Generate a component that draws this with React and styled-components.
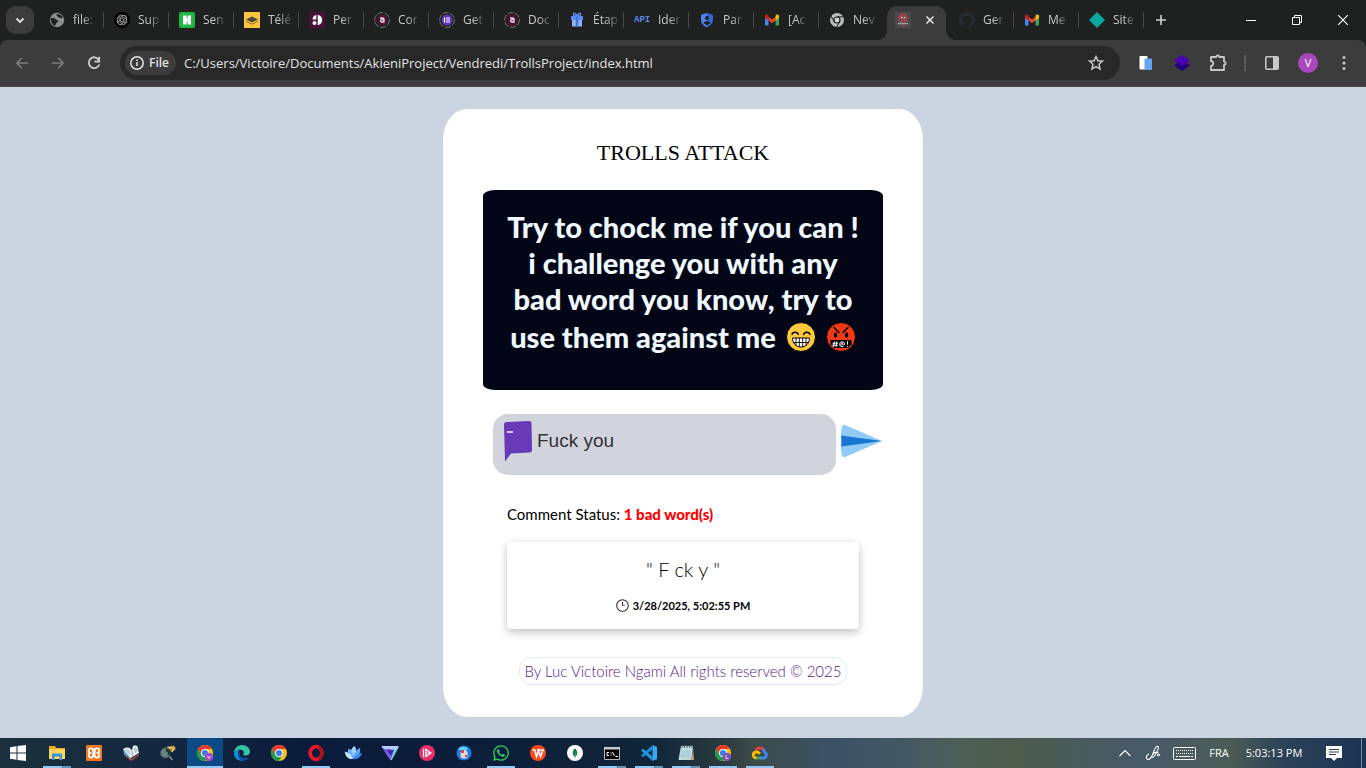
import React from 'react';
import styled, { createGlobalStyle, css } from 'styled-components';
import { FaGithub, FaWhatsapp } from 'react-icons/fa';
import { SiMongodb, SiOpenai } from 'react-icons/si';

const UI = '"Open Sans", "Noto Sans", sans-serif';
const BODY = 'Lato, "Open Sans", sans-serif';

const GlobalStyle = createGlobalStyle`
  *, *::before, *::after { box-sizing: border-box; }
  body { margin: 0; background: #cbd5e1; font-family: ${BODY}; color: #000; }
  button { border: 0; padding: 0; margin: 0; background: none; color: inherit; font: inherit; cursor: pointer; }
  svg { display: block; flex: none; }
  h1, h2, p { margin: 0; font-weight: inherit; }
`;

const Desktop = styled.div`
  min-height: 100vh;
  display: flex;
  flex-direction: column;
`;

/* ---------- browser window ---------- */

const Browser = styled.header`
  background: #1f2120;
`;

const TabStrip = styled.div`
  display: flex;
  align-items: center;
  height: 40px;
  color: #c7c7c7;
  font: 12px/16px ${UI};
`;

const TabSearch = styled.button`
  display: grid;
  place-items: center;
  width: 28px;
  height: 28px;
  margin: 0 5px 0 6px;
  border-radius: 10px;
  background: #3c3c3c;
`;

const Tab = styled.button`
  display: flex;
  align-items: center;
  gap: 8px;
  width: 65px;
  height: 16px;
  padding-left: 10px;
  border-right: 1px solid ${(p) => (p.$plain ? 'transparent' : '#474747')};
`;

const TabTitle = styled.span`
  white-space: nowrap;
  mask-image: linear-gradient(90deg, #000 50%, rgba(0, 0, 0, 0.2));
`;

const ActiveTab = styled.div`
  position: relative;
  align-self: flex-end;
  display: flex;
  align-items: center;
  justify-content: space-between;
  width: 59px;
  height: 34px;
  margin: 0 3px;
  padding: 0 10px 6px 8px;
  border-radius: 10px 10px 0 0;
  background: #3c3c3c;
  color: #e8e8e8;
  &::before, &::after {
    content: '';
    position: absolute;
    bottom: 0;
    width: 10px;
    height: 10px;
  }
  &::before { right: 100%; background: radial-gradient(circle at 0 0, transparent 10px, #3c3c3c 10px); }
  &::after { left: 100%; background: radial-gradient(circle at 100% 0, transparent 10px, #3c3c3c 10px); }
`;

const NewTab = styled.button`
  display: grid;
  place-items: center;
  width: 34px;
  height: 28px;
`;

const WindowControls = styled.div`
  display: flex;
  margin-left: auto;
  color: #fff;
`;

const WindowButton = styled.button`
  display: grid;
  place-items: center;
  width: 46px;
  height: 40px;
`;

const Toolbar = styled.nav`
  display: flex;
  align-items: center;
  height: 47px;
  padding: 0 4px 1px;
  border-radius: 8px 8px 0 0;
  background: #3c3c3c;
  box-shadow: inset 0 -1px #4a4a4a;
  color: #c7c7c7;
`;

const ToolButton = styled.button`
  display: grid;
  place-items: center;
  width: 36px;
  height: 36px;
  color: ${(p) => (p.disabled ? '#7d7d7d' : '#c7c7c7')};
`;

const Omnibox = styled.div`
  flex: 1;
  display: flex;
  align-items: center;
  gap: 8px;
  height: 34px;
  margin: 0 8px;
  padding: 0 6px 0 5px;
  border-radius: 17px;
  background: #282828;
`;

const SchemeChip = styled.button`
  display: flex;
  align-items: center;
  gap: 4px;
  height: 24px;
  padding: 0 7px 0 4px;
  border-radius: 12px;
  background: #3c3c3c;
  color: #e3e3e3;
  font: 600 12px/16px ${UI};
`;

const Address = styled.input`
  flex: 1;
  min-width: 0;
  padding: 0;
  border: 0;
  outline: 0;
  background: none;
  color: #e3e3e3;
  font: 13px/20px ${UI};
`;

const Divider = styled.span`
  width: 2px;
  height: 16px;
  margin: 0 8px;
  background: #5a5a5a;
`;

const Avatar = styled.span`
  width: 20px;
  height: 20px;
  border-radius: 50%;
  background: #ab47bc;
  color: #fff;
  font: 11px/20px ${UI};
  text-align: center;
`;

/* ---------- page ---------- */

const Page = styled.main`
  flex: 1;
  display: flex;
  justify-content: center;
  align-items: flex-start;
  padding: 22px 16px 21px;
  background: #cbd5e1;
`;

const Card = styled.section`
  display: flex;
  flex-direction: column;
  width: 100%;
  max-width: 480px;
  padding: 28px 40px 32px;
  border-radius: 5%;
  background: #fff;
`;

const Title = styled.h1`
  font: 22px/32px "Liberation Serif", "Times New Roman", serif;
  text-align: center;
`;

const Banner = styled.h2`
  min-height: 200px;
  margin-top: 21px;
  padding: 19px 16px;
  border-radius: 3%;
  background: #020617;
  color: #f0f8ff;
  font: 900 29px/36px ${BODY};
  text-align: center;
`;

const BannerLine = styled.span`
  display: block;
  white-space: nowrap;
`;

const EmojiLine = styled(BannerLine)`
  display: flex;
  align-items: center;
  justify-content: center;
  gap: 10px;
  height: 40px;
`;

const CommentForm = styled.form`
  display: flex;
  align-items: center;
  gap: 4px;
  margin: 24px 0 0 10px;
`;

const CommentField = styled.label`
  flex: 1;
  display: flex;
  align-items: center;
  gap: 4px;
  height: 61px;
  padding: 0 12px 7px 10px;
  border-radius: 15px;
  background: #d1d4dc;
`;

const CommentInput = styled.input`
  flex: 1;
  min-width: 0;
  padding: 0;
  border: 0;
  outline: 0;
  background: none;
  color: #333;
  font: 19px/24px "Liberation Sans", Arial, sans-serif;
`;

const SendButton = styled.button`
  padding: 0 1px 8px 0;
`;

const Status = styled.p`
  margin: 27px 24px 0;
  font-size: 15px;
  line-height: 24px;
`;

const BadCount = styled.strong`
  color: #f00;
  font-weight: 900;
`;

const Comment = styled.article`
  margin: 16px 24px 0;
  padding: 15px 16px;
  border-radius: 4px;
  background: #fff;
  box-shadow: 0 4px 8px rgba(0, 0, 0, 0.2), 0 0 8px rgba(0, 0, 0, 0.06);
  text-align: center;
`;

const CommentText = styled.p`
  font-size: 20px;
  font-weight: 300;
  line-height: 24px;
`;

const CommentDate = styled.p`
  display: flex;
  align-items: center;
  justify-content: center;
  gap: 4px;
  margin-top: 16px;
  font-size: 11px;
  font-weight: 700;
  line-height: 17px;
`;

const Credit = styled.a`
  align-self: center;
  margin-top: 28px;
  padding: 0 5px;
  border: 1px solid #dbeafe;
  border-radius: 12px;
  color: #551a8b;
  font-size: 15px;
  font-weight: 300;
  line-height: 26px;
  text-decoration: none;
`;

/* ---------- taskbar ---------- */

const Taskbar = styled.footer`
  display: flex;
  gap: 1px;
  height: 30px;
  background: linear-gradient(90deg, #1b313d 0%, #132740 12%, #0a1c3b 22%, #0b1d3a 34%, #10263a 48%, #2b3b3e 53%, #3b4b49 55%, #3c5265 61%, #455961 67%, #4d5f58 70%, #4c5b4b 74%, #475a5e 80%, #475a68 84%, #4b5c55 90%, #2b4258 94%, #1d3353 100%);
  color: #fff;
  font: 11px/16px ${UI};
`;

const Start = styled.button`
  display: flex;
  align-items: center;
  width: 38px;
  padding-left: 10px;
`;

const TaskButton = styled.button`
  display: flex;
  flex-direction: column;
  align-items: center;
  width: 36px;
  padding-top: 6px;
  background: ${(p) => (p.$active ? '#0b4a85' : 'none')};
  &::after {
    content: '';
    width: ${(p) => (p.$active ? '36px' : '28px')};
    height: 2px;
    margin-top: auto;
    ${(p) => p.$open && css`background: #90c8f6;`}
    ${(p) => p.$stacked && css`background: linear-gradient(90deg, #90c8f6 19px, #40607c 19px, #6b93b4 20px);`}
  }
`;

const Tray = styled.div`
  display: flex;
  align-items: center;
  margin-left: auto;
`;

const TrayButton = styled.button`
  display: grid;
  place-items: center;
  width: ${(p) => p.$w}px;
  height: 30px;
`;

const ShowDesktop = styled.button`
  width: 5px;
  height: 30px;
  border-left: 1px solid #7b8a9c;
`;

/* ---------- drawings ---------- */

const Svg = ({ s = 16, h, v = '0 0 16 16', children, ...rest }) => (
  <svg width={s} height={h || s} viewBox={v} fill="none" aria-hidden="true" {...rest}>{children}</svg>
);

const Globe = () => (
  <Svg>
    <circle cx="8" cy="8" r="7.2" fill="#8b8e8d" />
    <path d="M1.800 6c2 .2 4.400-.2 5 1.200.6 1.500 2.400.6 2.500 2 .1 1.500-2.300 1-2.500 2.500-.1 1-.3 1.700-1 2C3 12.500 1.500 9.500 1.800 6zM7.500 2.200c-.6 1.200.7 1.500 1.300 2.300.7 1 1.700 1.800 2.700 1.300.9-.4 1.800.4 2.600.2C13.400 4 11.500 2 9 1.900z" fill="#1f2120" />
  </Svg>
);
const OpenAi = () => (
  <Svg><circle cx="8" cy="8" r="8" fill="#000" /><SiOpenai x="2.5" y="2.5" size={11} color="#d8d8d8" /></Svg>
);
const GreenK = () => (
  <Svg><rect width="16" height="16" rx="2" fill="#1db544" /><path d="M4 3.500h3.600v2.800h1V3.500H12v3.700L11.200 8l.8.800v3.700H8.600V9.700h-1v2.800H4z" fill="#fff" /></Svg>
);
const Yellow = () => (
  <Svg><rect width="16" height="16" fill="#fec53d" /><path d="m2 7.500 6-3 6 3-6 3z" fill="#4e4a42" /><path d="m2 8.800 6 3 6-3v.9l-6 3-6-3z" fill="#8b6d35" /></Svg>
);
const Akieni = () => (
  <Svg><rect width="16" height="16" fill="#4b1237" /><path d="M7.300 3C4.900 3.500 3.500 5.300 3.500 7.600h3.800zM8.700 2.800c2.700.5 4.500 2.600 4.500 5.200s-1.800 4.700-4.500 5.200z" fill="#fff" /><circle cx="5.500" cy="11" r="2" fill="#fff" /></Svg>
);
const Ring = ({ fill, children }) => (
  <Svg><circle cx="8" cy="8" r="7.400" stroke="#77757a" strokeWidth="1" strokeDasharray="6 1.500" /><circle cx="8" cy="8" r="5.500" fill={fill} />{children}</Svg>
);
const RingA = () => (
  <Ring fill="#4b1237"><path d="M6 6h2.500A1.500 1.500 0 0 1 10 7.500V10H7.500a1.200 1.200 0 0 1 0-2.300H10" stroke="#e9dfe6" strokeWidth="1.300" /></Ring>
);
const RingList = () => (
  <Ring fill="#6034b8"><path d="M5.500 5.500v5M7 6h4M7 8h4M7 10h4" stroke="#fff" strokeWidth="1.200" /></Ring>
);
const Gift = () => (
  <Svg>
    <path d="M2 4h12v4H2z" fill="#5b8af0" /><path d="M3 8h10v6.500H3z" fill="#8fb2f5" /><path d="M6.800 4h2.400v10.500H6.800z" fill="#3f73dd" />
    <path d="M8 4C5 4 4 3 4.500 1.800S7.500 1.500 8 4c.5-2.500 3-3.400 3.500-2.200S11 4 8 4z" stroke="#5b8af0" strokeWidth="1.400" />
  </Svg>
);
const ApiMark = styled.span`
  width: 16px;
  color: #5c86e8;
  font: 700 9px/16px "Liberation Mono", monospace;
`;
const Shield = () => (
  <Svg><path d="M8 1 14 3v4.500c0 3.800-2.600 6.500-6 7.800-3.400-1.300-6-4-6-7.800V3z" fill="#3367d6" /><path d="M8 1v14.300c-3.400-1.300-6-4-6-7.800V3z" fill="#4f82ec" /><circle cx="8" cy="6" r="2" fill="#1f2120" /><path d="M4.500 11c1-2.200 6-2.200 7 0L8 13.500z" fill="#1f2120" /></Svg>
);
const Gmail = () => (
  <Svg>
    <path d="M1 4v8.500c0 .6.400 1 1 1h2.500V7z" fill="#4285f4" /><path d="M15 4v8.500c0 .6-.4 1-1 1h-2.500V7z" fill="#34a853" />
    <path d="M4.500 4.800 8 7.500l3.500-2.700V8.500L8 11.200 4.500 8.500z" fill="#ea4335" /><path d="M1 4.200C1 2.700 2.700 2 3.800 2.900l.7.500v5.100L1 6z" fill="#c5221f" /><path d="M15 4.200c0-1.500-1.700-2.200-2.800-1.300l-.7.500v5.100L15 6z" fill="#fbbc04" />
  </Svg>
);
const ChromeGrey = () => (
  <Svg>
    <circle cx="8" cy="8" r="7" fill="#b9bbba" /><circle cx="8" cy="8" r="3.600" fill="#1f2120" /><circle cx="8" cy="8" r="2.400" fill="#d3d4d3" />
    <path d="M8 4.800h6.500M5.200 9.600 2 4.100M10.800 9.600 7.600 15" stroke="#1f2120" strokeWidth="1" />
  </Svg>
);
const Troll = () => (
  <Svg><rect width="16" height="16" fill="#4b4b4d" /><circle cx="8" cy="6" r="4" stroke="#b8373d" strokeWidth="1.500" fill="#6f5255" /><path d="m5.500 3.500 5 5" stroke="#e05055" /><path d="M6 5.500h1.500M9 5.500h1.500" stroke="#ddd" /><path d="M3 11.500h10" stroke="#bdbdbd" strokeWidth="1.500" strokeDasharray="1.500 .6" /><circle cx="8" cy="14" r=".8" fill="#c44" /></Svg>
);
const Diamond = () => <Svg><path d="m8 0 8 8-8 8-8-8z" fill="#0aa6a0" /></Svg>;
const GitHub = () => <FaGithub size={16} color="#262c36" />;

const Chrome = ({ badge, letter }) => (
  <Svg s={18} v="0 0 18 18">
    <circle cx="9" cy="9" r="8" fill="#fbc116" />
    <path d="M2.070 5A8 8 0 0 1 15.930 5H9L5.540 11z" fill="#e33b2e" />
    <path d="M2.070 5A8 8 0 0 0 9 17l3.460-6H5.540z" fill="#229a4b" />
    <circle cx="9" cy="9" r="4" fill="#fff" /><circle cx="9" cy="9" r="3.100" fill="#3b7de8" />
    {badge && <circle cx="13" cy="13" r="4.200" fill={badge} />}
    {letter && <path d={letter} stroke="#e8d9f2" strokeWidth=".9" />}
  </Svg>
);

const Explorer = () => (
  <Svg s={18} v="0 0 18 18"><path d="M1 2h6l1.500 2H17v3H1z" fill="#e9a820" /><path d="M1 5h16v10H1z" fill="#fcd462" /><path d="M4 16V9.500h10V16h-2.500v-3.500h-5V16z" fill="#3a95dc" /></Svg>
);
const Xampp = () => (
  <Svg s={18} v="0 0 18 18">
    <rect x="1" y="1" width="16" height="16" rx="1" fill="#f37623" />
    <path d="M6.500 9H6a2.300 2.300 0 1 1 2.300-2.300V9h1.400V6.700A2.300 2.300 0 1 1 12 9h-.5M6.500 9H6a2.300 2.300 0 1 0 2.300 2.300V9M9.700 9v2.300A2.300 2.300 0 1 0 12 9" stroke="#fff" strokeWidth="1.700" />
  </Svg>
);
const Book = () => (
  <Svg s={18} v="0 0 18 18">
    <path d="m2 9 7 6 8-5v1.500L9 17l-7-6z" fill="#b64a3a" />
    <path d="m1 5 1 5 7 5.500-.5-3z" fill="#4fa9c4" />
    <path d="M1 5c2-1.600 4-2 6-1.200L10 6l1-4c2-.8 3.500-.5 4.500.5L17 9l-8.500 5z" fill="#e9f1f4" />
    <path d="m3 5.500 5 5M5 4.800l4 4M12 4l2 5M13.500 3.500l1.800 4.500M10 6l.5 6" stroke="#7d9fb0" strokeWidth=".8" />
  </Svg>
);
const Magnifier = () => (
  <Svg s={18} v="0 0 18 18"><path d="m7 3 8-1.500L17 5l-4 3z" fill="#b98b3c" /><path d="m9 3.500 6 .5-2 4" stroke="#ecc66a" strokeWidth="1.400" /><circle cx="6.500" cy="9" r="5" fill="#6b7f86" stroke="#4b565a" /><path d="M7 6c3 0 4 2 3 5" stroke="#123d20" strokeWidth="3" /><path d="m10.500 12.500 3 3.500" stroke="#8b9498" strokeWidth="1.500" /></Svg>
);
const Edge = () => (
  <Svg s={18} v="0 0 18 18">
    <path d="M1 9.500C1 4.500 4.500 1 9.200 1 13.500 1 17 4 17 7.600c0 2.400-1.700 4-4.200 4-1.600 0-2.600-.5-2.600-1.200 0-.5.700-.8.700-1.900C10.900 7 9.500 5.800 7.300 5.800 4 5.800 1.500 7.600 1 9.500z" fill="#31c4a5" />
    <path d="M1 9.500c.4-2.500 2.800-4.200 5.600-4.200-1 1.400-1.500 2.800-1.500 4.300 0 3.600 2.500 6.200 6.500 6.200C7 18.500 1 15 1 9.500z" fill="#178ed8" />
    <path d="M7.200 8C5.500 12 9 15.500 15.700 13.500 13 18 6 18 5.200 12c-.2-1.600.6-3.300 2-4z" fill="#0b52a5" />
  </Svg>
);
const Opera = () => (
  <Svg s={18} v="0 0 18 18"><ellipse cx="9" cy="9" rx="5.900" ry="6.300" stroke="#e5172c" strokeWidth="3.800" /><path d="M11.500 2.800c4.500 2 4.500 10.400 0 12.400" stroke="#a9121f" strokeWidth="3" /></Svg>
);
const Lotus = () => (
  <Svg s={18} v="0 0 18 18">
    <path d="M8.500 15C5 11 6 5 10.500 2c3 4 2 9-2 13z" fill="#9fd6ff" /><path d="M8.500 15C10 9 13 5 16 4c1 5-2 10-7.500 11z" fill="#5ea9f7" />
    <path d="M8.500 15C4 13 3 8 4.500 4.500c4 2 5.500 6 4 10.500z" fill="#64b1fb" /><path d="M8.500 15c3-4 6-6 9.500-6-1 4-5 7-9.500 6z" fill="#3f86ea" />
    <path d="M8.500 15C4 15.500 1 12 .8 7.500c4 .8 7 3.500 7.700 7.500z" fill="#c4e6ff" />
  </Svg>
);
const Vpn = () => (
  <Svg s={18} v="0 0 18 18"><path d="M2 2h14.500c1 0 1.300.8.900 1.600L11 15.500c-.6 1-1.700 1-2.200 0L1 3.500C.6 2.700 1 2 2 2z" fill="#7a5cf0" /><path d="M2 2h14.500c1 0 1.300.8.900 1.600L15.500 7 4 5 1 3.500C.6 2.700 1 2 2 2z" fill="#b9c9fb" /><path d="M17.400 3.600 11 15.500c-.4.700-1 .9-1.500.7L13 6z" fill="#6fd6cf" /><path d="m5.500 5.500 4.300 6.500L13 5.800z" fill="#3f2aa8" /></Svg>
);
const Play = () => (
  <Svg s={18} v="0 0 18 18"><circle cx="9" cy="9" r="8" fill="#ec2f6b" /><path d="M5.500 5v8M7.800 5.500v7L13 9zM7.800 9H13" stroke="#fff" strokeWidth="1.200" /></Svg>
);
const Blob = () => (
  <Svg s={18} v="0 0 18 18"><circle cx="9" cy="9" r="7.500" fill="#1c7de0" /><path d="M3 5c3-3 8-3 10 0L9 8z" fill="#65d5ff" /><path d="M5.500 8c2-2 6-2 7 0v5c-2 2-5 2-7 0z" fill="#e9d5d8" /><path d="M6 6h3v3H6zM10 11h2v2h-2z" fill="#d44355" /></Svg>
);
const WhatsApp = () => <FaWhatsapp size={18} color="#27d366" />;
const Wps = () => (
  <Svg s={18} v="0 0 18 18"><circle cx="9" cy="9" r="8" fill="#ff4b1f" /><path d="M3.500 6h2.200L7.500 12.500 9.500 6.500l2 6L14 6H8" stroke="#fff" strokeWidth="1.600" /></Svg>
);
const Mongo = () => <Svg s={18} v="0 0 18 18"><circle cx="9" cy="9" r="8" fill="#fff" /><SiMongodb x="4" y="4" size={10} color="#13794b" /></Svg>;
const Cmd = () => (
  <Svg s={18} v="0 0 18 18"><path d="M1.500 3.500h15v12h-15z" fill="#000" stroke="#b5b5b5" /><path d="M1 3h16v2.500H1z" fill="#c9c9c9" /><path d="M6 8.500H4v3h2M8 8.500v1M8 10.500v1M9.500 8l2 4M12.500 12.500H15" stroke="#fff" strokeWidth="1" /></Svg>
);
const Code = () => (
  <Svg s={18} v="0 0 18 18"><path d="m12.500 1 4.500 2v12l-4.500 2z" fill="#3ba9ee" /><path d="M12.500 1v4.500L3 13.200 1 11.600z" fill="#1b87cf" /><path d="M12.500 17v-4.500L3 4.800 1 6.400z" fill="#2497df" /></Svg>
);
const Notepad = () => (
  <Svg s={18} v="0 0 18 18"><path d="M4 2h12l-1.500 14H1.500z" fill="#c3dde6" /><path d="M16 3.500 17 16H3l12-.5z" fill="#c8b070" /><path d="M5 1v3M7.500 1v3M10 1v3M12.500 1v3M15 1v3" stroke="#4b5b60" strokeWidth="1" /><path d="M4 7h10M4 9h10M3.500 11h10M3 13h10" stroke="#8db4c3" strokeWidth=".7" /></Svg>
);
const Cloud = () => (
  <Svg s={18} v="0 0 18 18" strokeWidth="2.800"><path d="M5 6.500C6.500 3 11 3 12.500 6" stroke="#ea4335" /><path d="M11.800 5c1.500 1 1.700 2 2 3.500 2.800 1.500 1.700 5.500-1 5.500H9" stroke="#4285f4" /><path d="M9.500 14H5" stroke="#34a853" /><path d="M5.500 14c-4 0-4.300-5.500-.5-6 2-.2 3 .8 4 1.800" stroke="#fbbc04" /></Svg>
);

const Grin = () => (
  <Svg s={30} v="0 0 30 30">
    <circle cx="15" cy="15" r="14.500" fill="#ffc83d" stroke="#000" />
    <path d="M6 12.500c.6-3 5.500-3 6.300 0M17.700 12.500c.6-3 5.500-3 6.300 0" stroke="#000" strokeWidth="1.300" strokeLinecap="round" />
    <path d="M6.500 16h17c0 5-3.500 9-8.500 9s-8.500-4-8.500-9z" fill="#fff" stroke="#000" />
    <path d="M7 20.500h16M10 16v7.500M13.300 16v9M16.700 16v9M20 16v7.500" stroke="#000" strokeWidth=".9" />
  </Svg>
);
const Cursing = () => (
  <Svg s={30} v="0 0 30 30">
    <circle cx="15" cy="15" r="14.500" fill="#f03a17" stroke="#000" />
    <path d="m8 5.500 5 5M22 5.500l-5 5" stroke="#000" strokeWidth="1.500" strokeLinecap="round" />
    <ellipse cx="9.500" cy="13" rx="1.700" ry="2.700" fill="#000" /><ellipse cx="20.500" cy="13" rx="1.700" ry="2.700" fill="#000" />
    <path d="M4.500 18h21v4.500L22 26H8l-3.500-3.500z" fill="#000" />
    <path d="M8.500 19.500 7.500 25M11 19.500 10 25M6.500 21.200H12M6.200 23.200h5.500M17 24.500c-4 1-4.500-4.500-1-4.700 3-.2 3.200 3.700 1.300 3.500-1-.1-.8-2.300-.8-2.300-1.500-.5-2.500 2.200-.8 2.200M21.500 19.200v3.500M21.500 24v1.200" stroke="#fff" strokeWidth="1" />
  </Svg>
);
const CommentIcon = () => (
  <Svg s={30} h={42} v="0 0 30 42"><path d="M1 5C1 3.300 2 2.200 3.800 2.100L26 1c1.700 0 2.500 1 2.500 2.700L29 30c0 1.800-.9 2.500-2.600 2.500L8 33.500 2 41.500z" fill="#673ab7" /><path d="M4 11h6v2H4z" fill="#d8c9ee" /></Svg>
);
const Plane = () => (
  <Svg s={42} h={34} v="0 0 42 34"><path d="M1 12C1 4 2 0 5 1l37 16L5 33c-3 1-4-3-4-11z" fill="#90caf9" /><path d="m1 11.500 41 5.500L1 22.500c.7-3.500.7-7.500 0-11z" fill="#1976d2" /></Svg>
);

const tabs = [
  ['file:', Globe], ['Sup', OpenAi], ['Sen', GreenK], ['Télé', Yellow], ['Per', Akieni],
  ['Cor', RingA], ['Get', RingList], ['Doc', RingA], ['Étap', Gift],
  ['Ider', () => <ApiMark>API</ApiMark>], ['Par', Shield], ['[Ac', Gmail], ['Nev', ChromeGrey],
];
const tabsAfter = [['Ger', GitHub], ['Me', Gmail], ['Site', Diamond]];

const apps = [
  ['File Explorer', Explorer, 'stacked'], ['XAMPP', Xampp], ['Dictionary', Book], ['Search tool', Magnifier],
  ['Chrome, Victoire', () => <Chrome badge="#a64cc0" letter="M11.500 12 13 14.500 14.500 12" />, 'active'],
  ['Edge', Edge], ['Chrome', Chrome], ['Opera', Opera, 'open'], ['Lotus', Lotus], ['VPN', Vpn], ['Player', Play],
  ['Game', Blob], ['WhatsApp', WhatsApp, 'open'], ['WPS Office', Wps], ['MongoDB', Mongo],
  ['Command Prompt', Cmd, 'stacked'], ['VS Code', Code, 'stacked'], ['Notepad', Notepad, 'stacked'],
  ['Chrome, Luc', () => <Chrome badge="#7b4fb5" letter="M12 11v3.500h2.300" />, 'open'], ['Google Cloud', Cloud, 'open'],
];

const renderTab = ([title, Icon], i, list) => (
  <Tab key={i} $plain={list === tabs && i === tabs.length - 1}>
    <Icon />
    <TabTitle>{title}</TabTitle>
  </Tab>
);

export default function App() {
  return (
    <Desktop>
      <GlobalStyle />
      <Browser>
        <TabStrip>
          <TabSearch aria-label="Search tabs">
            <Svg s={10} v="0 0 10 10"><path d="m1.500 3.500 3.500 3.500 3.500-3.500" stroke="#e3e3e3" strokeWidth="1.800" /></Svg>
          </TabSearch>
          {tabs.map(renderTab)}
          <ActiveTab>
            <Troll />
            <button aria-label="Close tab">
              <Svg s={12} v="0 0 12 12"><path d="m2.500 2.500 7 7m0-7-7 7" stroke="currentColor" strokeWidth="1.500" /></Svg>
            </button>
          </ActiveTab>
          {tabsAfter.map(renderTab)}
          <NewTab aria-label="New tab">
            <Svg s={12} v="0 0 12 12"><path d="M6 1v10M1 6h10" stroke="#d0d0d0" strokeWidth="1.600" /></Svg>
          </NewTab>
          <WindowControls>
            <WindowButton aria-label="Minimize"><Svg s={10} v="0 0 10 10"><path d="M0 5.500h10" stroke="#fff" /></Svg></WindowButton>
            <WindowButton aria-label="Restore"><Svg s={10} v="0 0 10 10"><path d="M.5 2.500h7v7h-7zM2.500 2.500v-2h7v7h-2" stroke="#fff" /></Svg></WindowButton>
            <WindowButton aria-label="Close"><Svg s={10} v="0 0 10 10"><path d="m0 0 10 10m0-10L0 10" stroke="#fff" strokeWidth="1.100" /></Svg></WindowButton>
          </WindowControls>
        </TabStrip>

        <Toolbar aria-label="Browser toolbar">
          <ToolButton aria-label="Back" disabled><Svg><path d="M14 8H3M8 2.800 2.800 8 8 13.200" stroke="currentColor" strokeWidth="1.600" /></Svg></ToolButton>
          <ToolButton aria-label="Forward" disabled><Svg><path d="M2 8h11M8 2.800 13.200 8 8 13.200" stroke="currentColor" strokeWidth="1.600" /></Svg></ToolButton>
          <ToolButton aria-label="Reload"><Svg><path d="M12.900 5A5.400 5.400 0 1 0 13.300 9.500" stroke="#cfcfcf" strokeWidth="1.800" /><path d="M13.200 1.800v4.700H8.500" stroke="#cfcfcf" strokeWidth="1.800" /></Svg></ToolButton>
          <Omnibox>
            <SchemeChip>
              <Svg><circle cx="8" cy="8" r="6.200" stroke="currentColor" strokeWidth="1.500" /><path d="M8 7v4M8 4.500V6" stroke="currentColor" strokeWidth="1.500" /></Svg>
              File
            </SchemeChip>
            <Address aria-label="Address" defaultValue="C:/Users/Victoire/Documents/AkieniProject/Vendredi/TrollsProject/index.html" />
            <ToolButton aria-label="Bookmark this page"><Svg><path d="m8 1.500 1.900 4.300 4.600.4-3.500 3.100 1.100 4.600L8 11.500l-4.100 2.400L5 9.300 1.500 6.200l4.600-.4z" stroke="currentColor" strokeWidth="1.500" /></Svg></ToolButton>
          </Omnibox>
          <ToolButton aria-label="Copy extension"><Svg><rect x="1.500" y="1" width="8" height="13.500" rx="1" fill="#fff" /><rect x="6.500" y="3.500" width="7.500" height="11.500" rx="1" fill="#64a5f7" /></Svg></ToolButton>
          <ToolButton aria-label="Layers extension"><Svg><path d="m8 5 8 5.500L8 16l-8-5.500z" fill="#21007b" /><path d="m8 0 8 5.500L8 11 0 5.500z" fill="#4a00b4" /></Svg></ToolButton>
          <ToolButton aria-label="Extensions"><Svg s={18} v="0 0 18 18"><path d="M2 3h5.300a1.500 1.500 0 0 1 3 0H15v4.600a1.600 1.600 0 0 1 0 3.200V16H2v-4.200c3-.3 3-4.300 0-4.600z" stroke="currentColor" strokeWidth="1.800" strokeLinejoin="round" /></Svg></ToolButton>
          <Divider />
          <ToolButton aria-label="Side panel"><Svg><rect x="1.800" y="1.800" width="12.400" height="12.400" rx="1" stroke="currentColor" strokeWidth="1.600" /><path d="M9 2h5v12H9z" fill="currentColor" /></Svg></ToolButton>
          <ToolButton aria-label="Profile"><Avatar>V</Avatar></ToolButton>
          <ToolButton aria-label="Menu"><Svg><circle cx="8" cy="2.500" r="1.500" fill="currentColor" /><circle cx="8" cy="8" r="1.500" fill="currentColor" /><circle cx="8" cy="13.500" r="1.500" fill="currentColor" /></Svg></ToolButton>
        </Toolbar>
      </Browser>

      <Page>
        <Card>
          <Title>TROLLS ATTACK</Title>
          <Banner>
            <BannerLine>Try to chock me if you can !</BannerLine>
            <BannerLine>i challenge you with any</BannerLine>
            <BannerLine>bad word you know, try to</BannerLine>
            <EmojiLine>use them against me <Grin /> <Cursing /></EmojiLine>
          </Banner>
          <CommentForm onSubmit={(e) => e.preventDefault()}>
            <CommentField>
              <CommentIcon />
              <CommentInput aria-label="Comment" defaultValue="Fuck you" />
            </CommentField>
            <SendButton aria-label="Send"><Plane /></SendButton>
          </CommentForm>
          <Status>Comment Status: <BadCount>1 bad word(s)</BadCount></Status>
          <Comment>
            <CommentText>" F ck y "</CommentText>
            <CommentDate>
              <Svg s={13} v="0 0 13 13"><circle cx="6.500" cy="6.500" r="5.800" stroke="#333" strokeWidth="1.100" /><path d="M6.500 3v4" stroke="#333" /><path d="M6.500 6.500H9" stroke="#d33" strokeWidth=".8" /></Svg>
              3/28/2025, 5:02:55 PM
            </CommentDate>
          </Comment>
          <Credit href="#">By Luc Victoire Ngami All rights reserved © 2025</Credit>
        </Card>
      </Page>

      <Taskbar>
        <Start aria-label="Start"><Svg><path d="M0 2.200 6.500 1.300v6.200H0zM7.500 1.100 16 0v7.500H7.500zM0 8.500h6.500v6.200L0 13.800zM7.500 8.500H16V16l-8.500-1.100z" fill="#fff" /></Svg></Start>
        {apps.map(([name, Icon, state]) => (
          <TaskButton key={name} aria-label={name} $active={state === 'active'} $open={state} $stacked={state === 'stacked'}><Icon /></TaskButton>
        ))}
        <Tray>
          <TrayButton $w={20} aria-label="Show hidden icons"><Svg s={12} v="0 0 12 12"><path d="m.5 9 5.500-5.500L11.500 9" stroke="#fff" strokeWidth="1.100" /></Svg></TrayButton>
          <TrayButton $w={36} aria-label="Pen"><Svg><path d="M4 9c-3 1-3.500 5-1 5.500 2.500.3 3.500-2 5-6C9.500 4 11 .5 13 1.500c1.500 1-.5 4-2 7-1.500 2.500-3 4.500-4 4-1-.8 1-4 3-5s4 0 3 2 1 1 2 0" stroke="#fff" strokeWidth="1.100" /></Svg></TrayButton>
          <TrayButton $w={26} aria-label="Touch keyboard"><Svg s={23} h={13} v="0 0 23 13"><rect x=".5" y=".5" width="22" height="12" rx="1" stroke="#fff" /><path d="M3 3.500h17M3 6.500h17" stroke="#fff" strokeDasharray="1 1" /><path d="M3 9.500h2M6 9.500h11M18 9.500h2" stroke="#fff" /></Svg></TrayButton>
          <TrayButton $w={44}>FRA</TrayButton>
          <TrayButton $w={66}>5:03:13 PM</TrayButton>
          <TrayButton $w={54} aria-label="Notifications"><Svg><path d="M0 1h16v12h-5l-3 3-3-3H0z" fill="#fff" /><path d="M3 4.500h10M3 7h10M3 9.500h7" stroke="#2b4258" /></Svg></TrayButton>
          <ShowDesktop aria-label="Show desktop" />
        </Tray>
      </Taskbar>
    </Desktop>
  );
}
